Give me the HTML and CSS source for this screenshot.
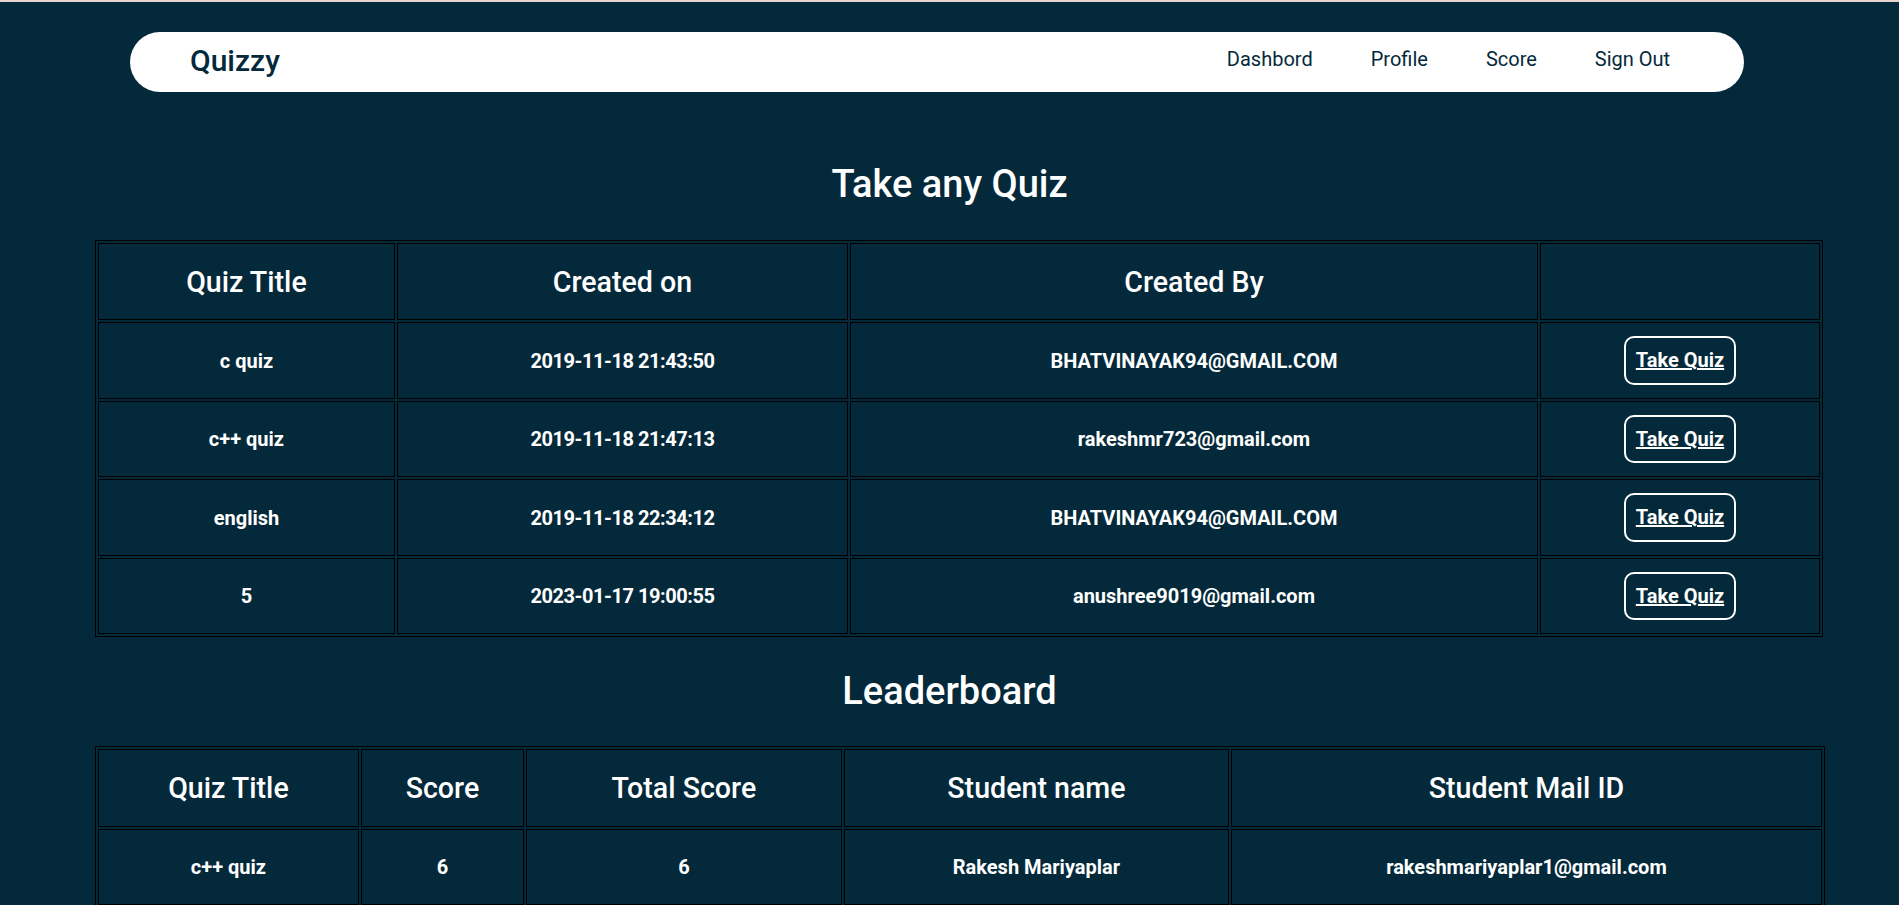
FILE: index.html
```html
<!DOCTYPE html>
<html lang="en">
<head>
<meta charset="utf-8">
<title>Quizzy</title>
<link rel="stylesheet" href="styles.css">
</head>
<body>
<nav class="navbar">
  <a class="brand" href="#">Quizzy</a>
  <ul class="nav-links">
    <li><a href="#">Dashbord</a></li>
    <li><a href="#">Profile</a></li>
    <li><a href="#">Score</a></li>
    <li><a href="#">Sign Out</a></li>
  </ul>
</nav>
<main class="content">
  <h2 class="section-title">Take any Quiz</h2>
  <table class="data-table quiz-table">
    <thead>
      <tr>
        <th class="q-title">Quiz Title</th>
        <th class="q-created">Created on</th>
        <th class="q-author">Created By</th>
        <th class="q-action"></th>
      </tr>
    </thead>
    <tbody>
      <tr>
        <td>c quiz</td>
        <td class="date">2019-11-18 21:43:50</td>
        <td>BHATVINAYAK94@GMAIL.COM</td>
        <td><a class="take-btn" href="#">Take Quiz</a></td>
      </tr>
      <tr>
        <td>c++ quiz</td>
        <td class="date">2019-11-18 21:47:13</td>
        <td>rakeshmr723@gmail.com</td>
        <td><a class="take-btn" href="#">Take Quiz</a></td>
      </tr>
      <tr>
        <td>english</td>
        <td class="date">2019-11-18 22:34:12</td>
        <td>BHATVINAYAK94@GMAIL.COM</td>
        <td><a class="take-btn" href="#">Take Quiz</a></td>
      </tr>
      <tr>
        <td>5</td>
        <td class="date">2023-01-17 19:00:55</td>
        <td>anushree9019@gmail.com</td>
        <td><a class="take-btn" href="#">Take Quiz</a></td>
      </tr>
    </tbody>
  </table>

  <h2 class="section-title">Leaderboard</h2>
  <table class="data-table leader-table">
    <thead>
      <tr>
        <th class="l-title">Quiz Title</th>
        <th class="l-score">Score</th>
        <th class="l-total">Total Score</th>
        <th class="l-name">Student name</th>
        <th class="l-mail">Student Mail ID</th>
      </tr>
    </thead>
    <tbody>
      <tr>
        <td>c++ quiz</td>
        <td>6</td>
        <td>6</td>
        <td>Rakesh Mariyaplar</td>
        <td>rakeshmariyaplar1@gmail.com</td>
      </tr>
      <tr>
        <td>c quiz</td>
        <td>5</td>
        <td>6</td>
        <td>Rakesh Mariyaplar</td>
        <td>rakeshmariyaplar1@gmail.com</td>
      </tr>
    </tbody>
  </table>
</main>
</body>
</html>
```

FILE: styles.css
```css
html {
  background: #04293a;
  scrollbar-width: none;
}

body {
  margin: 0;
  border-top: 2px solid #e6d6ce;
  background: #04293a;
  font-family: Roboto, "Liberation Sans", Arial, sans-serif;
  color: #ffffff;
}

.navbar {
  box-sizing: border-box;
  width: 85%;
  height: 60px;
  margin: 30px 0 0 130px;
  padding: 0 74px 0 60px;
  background: #ffffff;
  border-radius: 30px;
  display: flex;
  align-items: center;
  justify-content: space-between;
}

.brand {
  color: #04293a;
  text-decoration: none;
  font-size: 30px;
  font-weight: 500;
  line-height: 35px;
  padding-bottom: 4px;
}

.nav-links {
  list-style: none;
  margin: 0;
  padding: 0 0 6px 0;
  display: flex;
  gap: 58px;
}

.nav-links a {
  color: #04293a;
  text-decoration: none;
  font-size: 20px;
  font-weight: 400;
  line-height: 24px;
}

.content {
  padding-top: 38px;
}

.section-title {
  margin: 32px 0;
  text-align: center;
  font-size: 38px;
  font-weight: 500;
  line-height: 45px;
  color: #ffffff;
}

.data-table {
  table-layout: fixed;
  width: 91%;
  margin-left: 5%;
  border: 1px solid #000000;
  border-collapse: separate;
  border-spacing: 2px;
}

.quiz-table {
  margin-top: 33px;
}

.data-table th,
.data-table td {
  box-sizing: border-box;
  border: 1px solid #000000;
  padding: 0;
  text-align: center;
  vertical-align: middle;
  color: #ffffff;
}

.data-table th {
  height: 77.4px;
  font-size: 28.6px;
  font-weight: 500;
}

.data-table td {
  height: 76.5px;
  font-size: 20px;
  font-weight: 700;
}

.data-table td.date {
  letter-spacing: -0.45px;
}

.q-title { width: 297px; }
.q-created { width: 451px; }
.q-author { width: 688px; }
.q-action { width: 280px; }

.l-title { width: 261px; }
.l-score { width: 163px; }
.l-total { width: 316px; }
.l-name { width: 385px; }
.l-mail { width: 591px; }

.take-btn {
  display: inline-block;
  padding: 10px 9.5px;
  border: 2px solid #ffffff;
  border-radius: 10px;
  color: #ffffff;
  font-size: 20px;
  font-weight: 700;
  line-height: 24.5px;
  text-decoration: underline;
}
```
